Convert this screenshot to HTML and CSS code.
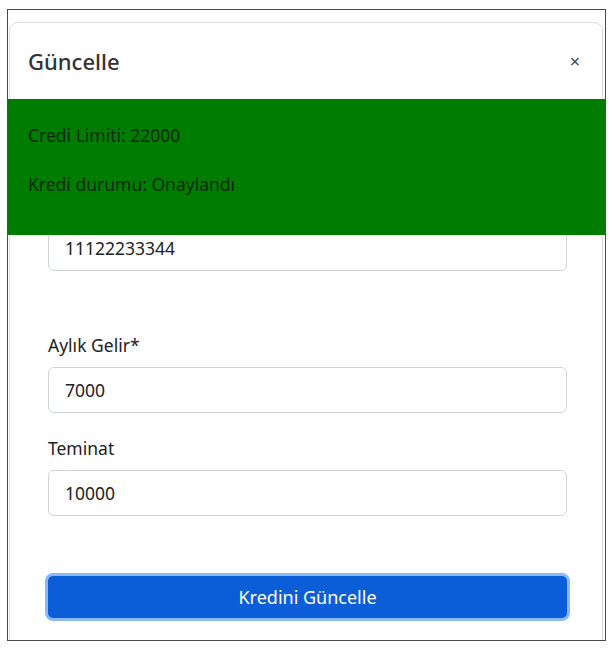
FILE: index.html
```html
<!DOCTYPE html>
<html lang="tr">
<head>
<meta charset="utf-8">
<link rel="stylesheet" href="styles.css">
</head>
<body>
<div class="frame">
  <div class="modal">
    <div class="modal-header">
      <h5 class="modal-title">Güncelle</h5>
      <span class="close">×</span>
    </div>
    <div class="modal-body">
      <div class="group">
        <div class="input">11122233344</div>
      </div>
      <div class="spacer"></div>
      <div class="group">
        <label class="label">Aylık Gelir*</label>
        <div class="input">7000</div>
      </div>
      <div class="group">
        <label class="label">Teminat</label>
        <div class="input">10000</div>
      </div>
      <div class="btn-wrap">
        <button class="btn">Kredini Güncelle</button>
      </div>
    </div>
  </div>
  <div class="result">
    <p>Credi Limiti: 22000</p>
    <p>Kredi durumu: Onaylandı</p>
  </div>
</div>
</body>
</html>
```

FILE: styles.css
```css
* { box-sizing: border-box; }
html, body { margin: 0; padding: 0; background: #fff; }
body {
  font-family: "Noto Sans", "Open Sans", sans-serif;
  color: #212529;
}
.frame {
  position: relative;
  margin: 9px 0 0 7px;
  width: 599px;
  height: 632px;
  border: 1.5px solid #4a4a4a;
  overflow: hidden;
  background: #fff;
}
.modal {
  margin: 12px 2px 0 1px;
  border: 1px solid #dcdcdc;
  border-radius: 9px 9px 0 0;
  height: 700px;
}
.modal-header {
  height: 78px;
  display: flex;
  align-items: center;
  justify-content: space-between;
  padding: 0 22px 2px 18px;
  border-bottom: 1px solid #dee2e6;
}
.modal-title {
  margin: 0;
  font-size: 22px;
  font-weight: 500;
  color: #333;
}
.close {
  font-size: 18px;
  color: #444;
}
.modal-body {
  padding: 124px 35px 0 38px;
}
.group { margin-bottom: 23px; }
.label {
  display: block;
  font-size: 17.5px;
  color: #222;
  margin-bottom: 10px;
  line-height: 24px;
}
.input {
  height: 46px;
  border: 1px solid #ced4da;
  border-radius: 6px;
  padding: 0 16px;
  display: flex;
  align-items: center;
  font-size: 17.5px;
  color: #222;
}
.spacer { height: 39px; }
.btn-wrap { padding-top: 34px; }
.btn {
  display: block;
  width: calc(100% + 6px);
  margin-left: -3px;
  height: 48px;
  border: 3px solid #8bb8f8;
  border-radius: 8px;
  background: #0b5ed7;
  color: #fff;
  font-family: inherit;
  font-size: 18px;
}
.result {
  position: absolute;
  left: 0;
  right: 0;
  top: 89px;
  height: 136px;
  background: #007c00;
  padding: 24px 20px 0;
  color: #0f2a0f;
  font-size: 17.5px;
}
.result p { margin: 0 0 25px; line-height: 24px; }
```
